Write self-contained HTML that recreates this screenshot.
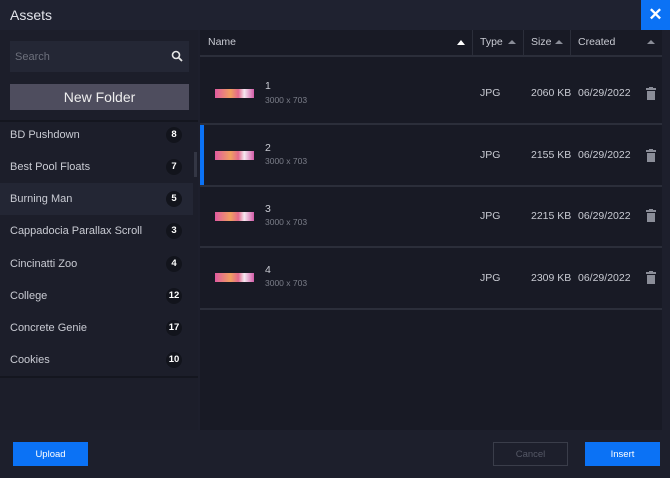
<!DOCTYPE html>
<html><head><style>
*{box-sizing:border-box;margin:0;padding:0}
body{width:670px;height:478px;background:#1d1f2c;font-family:"Liberation Sans",sans-serif;color:#c9cbd3;position:relative;overflow:hidden}
.abs{position:absolute}
.hdr{left:0;top:0;width:670px;height:30px;background:#1f2230}
.title{left:10px;top:7px;font-size:14px;color:#e2e4ea}
.close{left:641px;top:0;width:29px;height:30px;background:#0b72f5;color:#fff;font-size:17px;font-weight:bold;text-align:center;line-height:30px}
.side{left:0;top:30px;width:198px;height:400px;background:#1c1e2a}
.search{left:10px;top:41px;width:179px;height:31px;background:#242735;font-size:11px;color:#6d707c;padding:10px 5px}
.nf{left:10px;top:84px;width:179px;height:26px;background:#4e4d5e;color:#eee;font-size:14px;text-align:center;line-height:26px}
.list{left:0;top:120px;width:198px;height:258px;border-top:2px solid #14161f;border-bottom:2px solid #14161f}
.item{position:absolute;left:0;width:193px;height:32px;font-size:11px;line-height:32px;padding-left:10px}
.badge{position:absolute;left:166px;top:8px;width:16px;height:16px;border-radius:8px;background:#12141c;color:#fff;font-weight:bold;font-size:9.5px;line-height:16px;text-align:center}
.main{left:200px;top:30px;width:462px;height:400px;background:#181a25}
.th{top:30px;height:26px;font-size:10.5px;line-height:24px;color:#c9cbd3}
.row{position:absolute;left:200px;width:462px;border-bottom:2px solid #2b2e3a}
.thumb{position:absolute;left:15px;width:39px;height:9px;background:linear-gradient(90deg,#e05aa0,#f0a060 40%,#e3688e 60%,#f5e9f0 75%,#d35aa8)}
.n{position:absolute;left:65px;font-size:10.5px;color:#c9cbd3}
.d{position:absolute;left:65px;font-size:8.5px;color:#7b7e89}
.c{position:absolute;font-size:10.5px;color:#c9cbd3}
.btn{top:442px;height:24px;font-size:9.5px;display:flex;align-items:center;justify-content:center;color:#fff;background:#0b72f5}
</style></head><body>
<div class="abs hdr"></div>
<div class="abs title">Assets</div>
<div class="abs close">✕</div>
<div class="abs side"></div>
<div class="abs search">Search</div>
<svg class="abs" style="left:171px;top:50px" width="12" height="12" viewBox="0 0 12 12"><circle cx="5" cy="5" r="3.5" stroke="#e6e6e6" stroke-width="1.6" fill="none"/><path d="M7.5 7.5L11 11" stroke="#e6e6e6" stroke-width="1.8"/></svg>
<div class="abs nf">New Folder</div>
<div class="abs list">
<div class="item" style="top:-3px">BD Pushdown<span class="badge">8</span></div>
<div class="item" style="top:29px">Best Pool Floats<span class="badge">7</span></div>
<div class="item" style="top:61px;background:#232634">Burning Man<span class="badge">5</span></div>
<div class="item" style="top:93px">Cappadocia Parallax Scroll<span class="badge">3</span></div>
<div class="item" style="top:126px">Cincinatti Zoo<span class="badge">4</span></div>
<div class="item" style="top:158px">College<span class="badge">12</span></div>
<div class="item" style="top:190px">Concrete Genie<span class="badge">17</span></div>
<div class="item" style="top:222px">Cookies<span class="badge">10</span></div>
</div>
<div class="abs" style="left:194px;top:152px;width:3px;height:25px;background:#333644"></div>
<div class="abs main"></div>
<div class="abs" style="left:200px;top:55px;width:462px;height:2px;background:#2b2e3a"></div>
<div class="abs th" style="left:208px">Name</div>
<div class="abs" style="left:457px;top:40px;width:0;height:0;border-left:4px solid transparent;border-right:4px solid transparent;border-bottom:5px solid #fff"></div>
<div class="abs" style="left:472px;top:30px;width:1px;height:25px;background:#2b2e3a"></div>
<div class="abs th" style="left:480px">Type</div>
<div class="abs" style="left:508px;top:40px;border-left:4px solid transparent;border-right:4px solid transparent;border-bottom:4px solid #8a8d98"></div>
<div class="abs" style="left:523px;top:30px;width:1px;height:25px;background:#2b2e3a"></div>
<div class="abs th" style="left:531px">Size</div>
<div class="abs" style="left:555px;top:40px;border-left:4px solid transparent;border-right:4px solid transparent;border-bottom:4px solid #8a8d98"></div>
<div class="abs" style="left:570px;top:30px;width:1px;height:25px;background:#2b2e3a"></div>
<div class="abs th" style="left:578px">Created</div>
<div class="abs" style="left:647px;top:40px;border-left:4px solid transparent;border-right:4px solid transparent;border-bottom:4px solid #8a8d98"></div>

<div class="row" style="top:57px;height:68px"><div class="thumb" style="top:32px"></div><div class="n" style="top:23px">1</div><div class="d" style="top:38px">3000 x 703</div><div class="c" style="left:280px;top:30px">JPG</div><div class="c" style="left:331px;top:30px">2060 KB</div><div class="c" style="left:378px;top:30px">06/29/2022</div></div>
<div class="row" style="top:125px;height:62px"><div class="abs" style="left:0;top:0;width:4px;height:60px;background:#0b72f5"></div><div class="thumb" style="top:26px"></div><div class="n" style="top:17px">2</div><div class="d" style="top:31px">3000 x 703</div><div class="c" style="left:280px;top:24px">JPG</div><div class="c" style="left:331px;top:24px">2155 KB</div><div class="c" style="left:378px;top:24px">06/29/2022</div></div>
<div class="row" style="top:187px;height:61px"><div class="thumb" style="top:25px"></div><div class="n" style="top:16px">3</div><div class="d" style="top:30px">3000 x 703</div><div class="c" style="left:280px;top:23px">JPG</div><div class="c" style="left:331px;top:23px">2215 KB</div><div class="c" style="left:378px;top:23px">06/29/2022</div></div>
<div class="row" style="top:248px;height:62px"><div class="thumb" style="top:25px"></div><div class="n" style="top:16px">4</div><div class="d" style="top:30px">3000 x 703</div><div class="c" style="left:280px;top:24px">JPG</div><div class="c" style="left:331px;top:24px">2309 KB</div><div class="c" style="left:378px;top:24px">06/29/2022</div></div>
<svg class="abs" style="left:646px;top:87px" width="10" height="205" viewBox="0 0 10 205">
<g fill="#8a8d98"><rect x="0" y="1" width="10" height="2"/><rect x="3" y="0" width="4" height="2"/><rect x="1" y="4" width="8" height="9"/></g>
<g fill="#8a8d98" transform="translate(0,62)"><rect x="0" y="1" width="10" height="2"/><rect x="3" y="0" width="4" height="2"/><rect x="1" y="4" width="8" height="9"/></g>
<g fill="#8a8d98" transform="translate(0,122)"><rect x="0" y="1" width="10" height="2"/><rect x="3" y="0" width="4" height="2"/><rect x="1" y="4" width="8" height="9"/></g>
<g fill="#8a8d98" transform="translate(0,184)"><rect x="0" y="1" width="10" height="2"/><rect x="3" y="0" width="4" height="2"/><rect x="1" y="4" width="8" height="9"/></g>
</svg>
<div class="abs btn" style="left:13px;width:75px">Upload</div>
<div class="abs btn" style="left:493px;width:75px;background:transparent;border:1px solid #3a3d4a;color:#555866">Cancel</div>
<div class="abs btn" style="left:585px;width:75px">Insert</div>
</body></html>
